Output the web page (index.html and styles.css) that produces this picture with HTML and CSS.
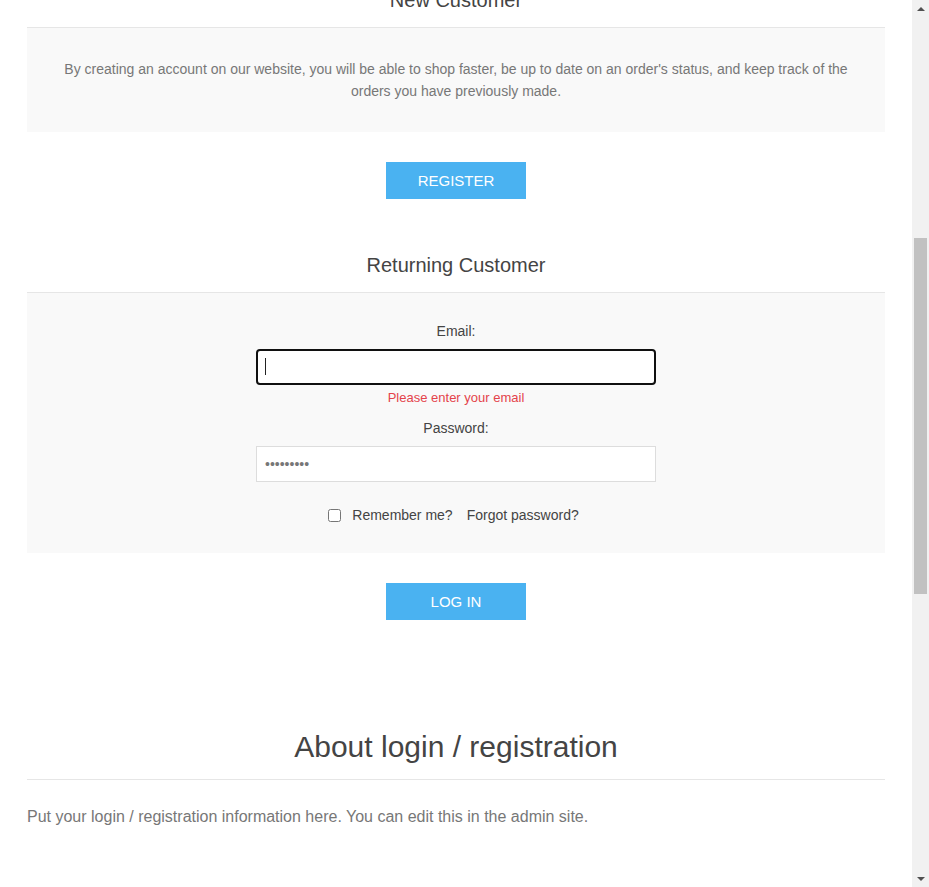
FILE: index.html
```html
<!DOCTYPE html>
<html lang="en">
<head>
<meta charset="utf-8">
<title>Login</title>
<link rel="stylesheet" href="styles.css">
</head>
<body>
<div class="viewport" id="viewport">
  <header class="site-header">
    <div class="page-title"><h1>Welcome, Please Sign In!</h1></div>
  </header>
  <main class="page">
    <div class="customer-blocks">
      <section class="new-wrapper">
        <div class="title">New Customer</div>
        <div class="text">By creating an account on our website, you will be able to shop faster, be up to date on an order's status, and keep track of the orders you have previously made.</div>
        <div class="buttons"><button class="button-1" type="button">Register</button></div>
      </section>
      <section class="returning-wrapper">
        <div class="title">Returning Customer</div>
        <form class="form-fields">
          <div class="inputs">
            <label class="field-label" for="email">Email:</label>
            <span class="field focused"><input class="text-input focus-input" id="email" type="text"></span>
            <span class="error">Please enter your email</span>
          </div>
          <div class="inputs inputs-last">
            <label class="field-label" for="pw">Password:</label>
            <span class="field"><input class="text-input" id="pw" type="password" value="123456789"></span>
          </div>
          <div class="remember">
            <input class="check" type="checkbox" id="rm">
            <label class="rm-label" for="rm">Remember me?</label>
            <a class="forgot" href="#">Forgot password?</a>
          </div>
        </form>
        <div class="buttons"><button class="button-1" type="button">Log in</button></div>
      </section>
    </div>
    <section class="topic-block">
      <div class="topic-title"><h2>About login / registration</h2></div>
      <div class="topic-body"><p>Put your login / registration information here. You can edit this in the admin site.</p></div>
    </section>
  </main>
  <footer class="site-footer"></footer>
</div>
<aside class="scrollbar" aria-hidden="true">
  <div class="sb-btn"><span class="arrow-up"></span></div>
  <div class="sb-track"><div class="sb-thumb"></div></div>
  <div class="sb-btn"><span class="arrow-down"></span></div>
</aside>
<script src="script.js"></script>
</body>
</html>
```
FILE: styles.css
```css
html, body {
  margin: 0;
  padding: 0;
  background: #fff;
  height: 100%;
  overflow: hidden;
}
body {
  display: flex;
  font-family: "Liberation Sans", Arial, sans-serif;
  color: #444;
  font-size: 14px;
}
.viewport {
  flex: 1;
  height: 100%;
  overflow-y: auto;
  scrollbar-width: none;
}
.viewport::-webkit-scrollbar {
  display: none;
}
.scrollbar {
  width: 17px;
  height: 100%;
  background: #f1f1f1;
  display: flex;
  flex-direction: column;
  flex-shrink: 0;
}
.sb-btn {
  height: 17px;
  display: flex;
  align-items: center;
  justify-content: center;
}
.arrow-up {
  width: 0;
  height: 0;
  border-left: 4px solid transparent;
  border-right: 4px solid transparent;
  border-bottom: 4px solid #505050;
  margin-left: 1px;
}
.arrow-down {
  width: 0;
  height: 0;
  border-left: 4px solid transparent;
  border-right: 4px solid transparent;
  border-top: 4px solid #505050;
  margin-left: 1px;
}
.sb-track {
  flex: 1;
}
.sb-thumb {
  margin: 221px 2px 0;
  height: 356px;
  background: #c1c1c1;
}
.site-header {
  height: 538px;
  display: flex;
  align-items: flex-end;
  justify-content: center;
}
.page-title h1 {
  margin: 0 0 60px;
  font-size: 30px;
  font-weight: normal;
}
.page {
  width: 858px;
  margin: 0 auto;
}
.title {
  font-size: 20px;
  line-height: 24px;
  text-align: center;
  color: #444;
  padding-bottom: 15px;
  border-bottom: 1px solid #e6e6e6;
}
.new-wrapper .text {
  background: #f9f9f9;
  padding: 30px 36px;
  text-align: center;
  line-height: 22px;
  color: #777;
}
.buttons {
  display: flex;
  justify-content: center;
  margin-top: 30px;
}
.button-1 {
  min-width: 140px;
  border: none;
  background: #4ab2f1;
  color: #fff;
  font-family: "Liberation Sans", Arial, sans-serif;
  font-size: 15px;
  line-height: 17px;
  padding: 10px 30px;
  text-transform: uppercase;
  cursor: pointer;
}
.returning-wrapper {
  margin-top: 54px;
}
.form-fields {
  background: #f9f9f9;
  padding: 30px 15px;
  display: flex;
  flex-direction: column;
  align-items: center;
}
.inputs {
  display: flex;
  flex-direction: column;
  align-items: center;
  margin-bottom: 15px;
}
.inputs-last {
  margin-bottom: 25px;
}
.field-label {
  display: block;
  line-height: 16px;
  margin-bottom: 10px;
  color: #444;
}
.field {
  display: block;
  position: relative;
  width: 400px;
  height: 36px;
}
.text-input {
  box-sizing: border-box;
  width: 400px;
  height: 36px;
  border: 1px solid #ddd;
  background: #fff;
  padding: 0 8px;
  font-family: "Liberation Sans", Arial, sans-serif;
  font-size: 14px;
  color: #777;
  outline: none;
}
.focus-input {
  border: 2px solid #101010;
  border-radius: 4px;
}
.focused::after {
  content: "";
  position: absolute;
  left: 9px;
  top: 9px;
  width: 1px;
  height: 17px;
  background: #222;
}
.error {
  display: block;
  margin-top: 5px;
  font-size: 13px;
  line-height: 15px;
  color: #e4434b;
}
.remember {
  display: flex;
  align-items: center;
  line-height: 16px;
  margin-right: 5px;
}
.check {
  width: 13px;
  height: 13px;
  margin: 0 11px 0 0;
}
.rm-label {
  color: #444;
  margin-right: 14px;
}
.forgot {
  color: #444;
  text-decoration: none;
}
.topic-block {
  margin-top: 110px;
}
.topic-title {
  text-align: center;
  padding-bottom: 15px;
  border-bottom: 1px solid #e6e6e6;
}
.topic-title h2 {
  margin: 0;
  font-size: 30px;
  line-height: 34px;
  font-weight: normal;
  color: #444;
}
.topic-body p {
  margin: 26px 0 0;
  font-size: 16px;
  line-height: 22px;
  color: #777;
}
.site-footer {
  height: 749px;
}
```
FILE: script.js
```js
var vp = document.getElementById('viewport');
vp.scrollTop = 550;
window.addEventListener('load', function () { vp.scrollTop = 550; });
```
